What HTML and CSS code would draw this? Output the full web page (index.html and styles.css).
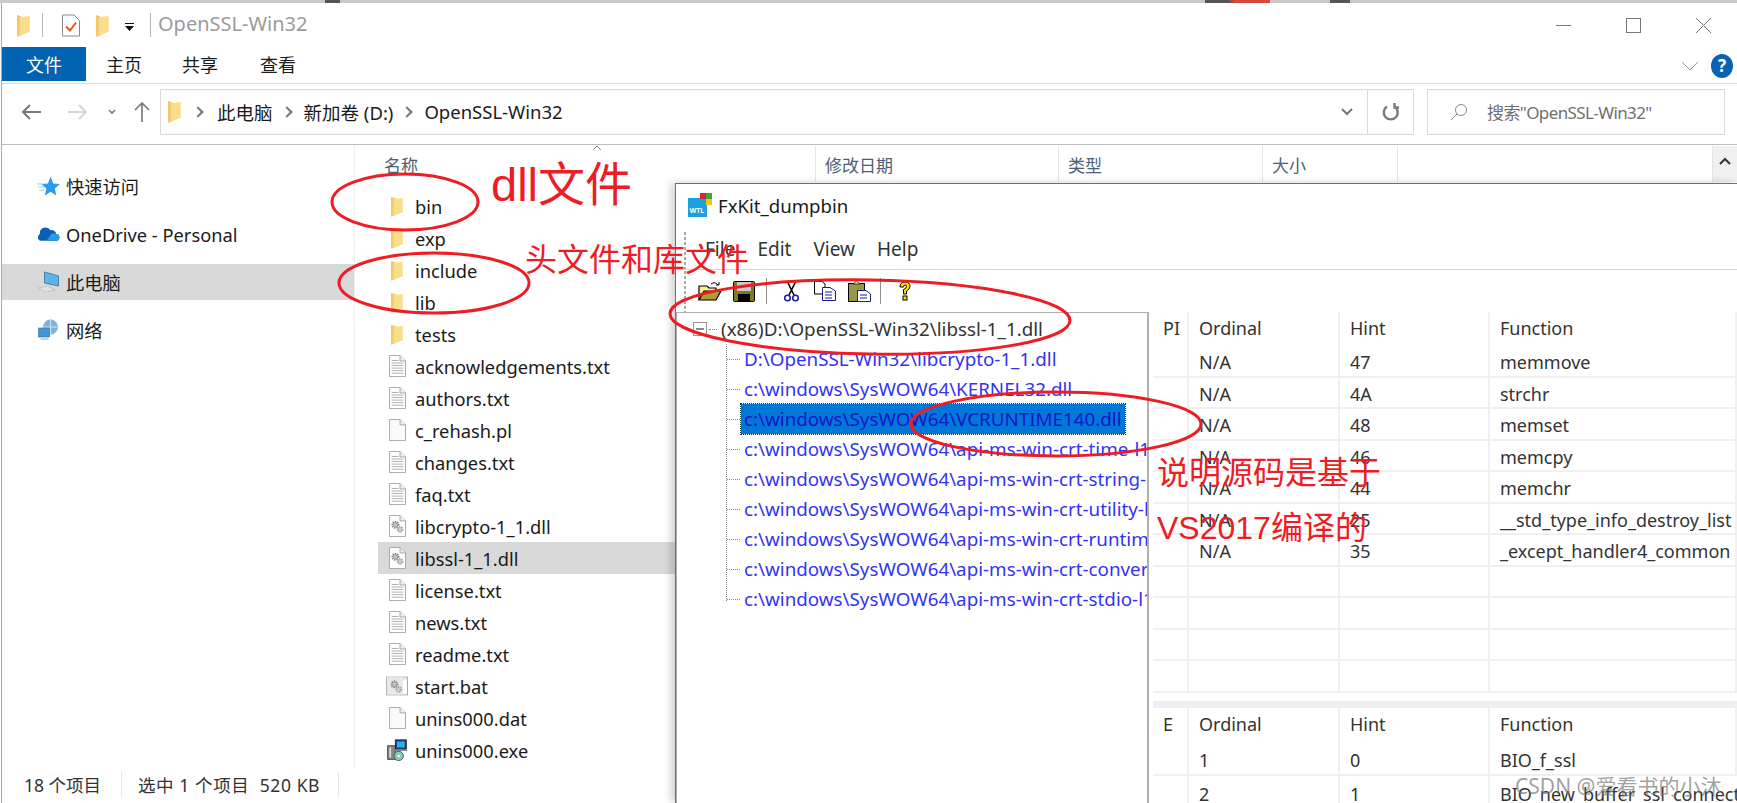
FILE: index.html
```html
<!DOCTYPE html>
<html lang="zh-CN">
<head>
  <meta charset="UTF-8" />
  <title>OpenSSL-Win32</title>
  <link rel="stylesheet" href="styles.css">
</head>
<body>

<!-- Icon sheet -->
<svg class="icon-sheet" xmlns="http://www.w3.org/2000/svg">
  <symbol id="i-folder" viewBox="0 0 14 22">
    <path d="M1 1 L6 3 V20 L1 21 Z" fill="#e7b64e"/>
    <path d="M3 3 L13 2 V17 L3 21 Z" fill="#fbdd8b"/>
    <path d="M3 3 L3 21 L1 22 V1 Z" fill="#f4ca67"/>
  </symbol>
  <symbol id="i-text" viewBox="0 0 20 26">
    <path d="M.5 .5 H13 L19.5 7 V25.5 H.5 Z" fill="#fff" stroke="#9a9a9a"/>
    <path d="M13 .5 V7 H19.5" fill="#eee" stroke="#9a9a9a"/>
    <path d="M3 6.5 H11 M3 9.5 H17 M3 12.5 H17 M3 15.5 H17 M3 18.5 H17 M3 21.5 H17" stroke="#a5a5a5"/>
  </symbol>
  <symbol id="i-blank" viewBox="0 0 20 26">
    <path d="M.5 .5 H13 L19.5 7 V25.5 H.5 Z" fill="#fafafa" stroke="#9a9a9a"/>
    <path d="M13 .5 V7 H19.5" fill="#eee" stroke="#9a9a9a"/>
  </symbol>
  <symbol id="i-dll" viewBox="0 0 20 26">
    <path d="M.5 .5 H13 L19.5 7 V25.5 H.5 Z" fill="#fff" stroke="#9a9a9a"/>
    <path d="M13 .5 V7 H19.5" fill="#eee" stroke="#9a9a9a"/>
    <circle cx="7.500" cy="11.500" r="3.400" fill="#c4c4c4" stroke="#8d8d8d" stroke-width="2.600" stroke-dasharray="1.600 .9"/>
    <circle cx="13" cy="17" r="2.800" fill="#d4d4d4" stroke="#a2a2a2" stroke-width="2.400" stroke-dasharray="1.400 .8"/>
  </symbol>
  <symbol id="i-bat" viewBox="0 0 26 22">
    <rect x=".5" y=".5" width="25" height="21" fill="#fff" stroke="#9a9a9a"/>
    <rect x="1" y="1" width="24" height="3" fill="#e6e6e6"/>
    <rect x="1" y="1" width="19" height="20" fill="#e9e9e9"/>
    <circle cx="10" cy="9" r="3.400" fill="#c4c4c4" stroke="#8d8d8d" stroke-width="2.600" stroke-dasharray="1.600 .9"/>
    <circle cx="15" cy="15" r="2.800" fill="#d4d4d4" stroke="#a2a2a2" stroke-width="2.400" stroke-dasharray="1.400 .8"/>
  </symbol>
  <symbol id="i-exe" viewBox="0 0 24 26">
    <rect x="1" y="8" width="9" height="16" fill="#8a8a8a" stroke="#333"/>
    <rect x="3" y="10" width="2" height="12" fill="#ddd"/>
    <rect x="10" y="1" width="13" height="11" fill="#1b3f9c" stroke="#222"/>
    <rect x="12" y="3" width="9" height="7" fill="#28b5e8"/>
    <rect x="9" y="12" width="15" height="2" fill="#777"/>
    <circle cx="14" cy="20" r="5.5" fill="#7fd0c0" stroke="#444"/>
    <circle cx="14" cy="20" r="1.5" fill="#fff"/>
  </symbol>
  <symbol id="i-gripdown" viewBox="0 0 12 8">
    <path d="M1 1 L6 6 L11 1" fill="none" stroke="currentColor" stroke-width="2"/>
  </symbol>
</svg>

<div class="desk-strip"></div>

<div class="explorer">
  <!-- Title bar -->
  <div class="titlebar">
    <svg class="qa-folder"><use href="#i-folder"/></svg>
    <span class="qa-sep"></span>
    <svg class="qa-check" viewBox="0 0 18 22">
      <path d="M.5 .5 H12 L17.5 6 V21.5 H.5 Z" fill="#fff" stroke="#8a8a8a"/>
      <path d="M4 12 L8 16 L14 8" fill="none" stroke="#e8551c" stroke-width="2"/>
    </svg>
    <svg class="qa-folder qa-folder-2"><use href="#i-folder"/></svg>
    <svg class="qa-drop" viewBox="0 0 9 9"><path d="M0 0 H9 V1 H0 Z M0 3 H9 L4.5 8 Z" fill="#111"/></svg>
    <span class="qa-sep qa-sep-2"></span>
    <span class="window-title">OpenSSL-Win32</span>
    <div class="win-controls">
      <svg viewBox="0 0 15 15"><path d="M0 7.5 H15" stroke="#777"/></svg>
      <svg viewBox="0 0 15 15"><rect x=".5" y=".5" width="14" height="14" fill="none" stroke="#777"/></svg>
      <svg viewBox="0 0 15 15"><path d="M0 0 L15 15 M15 0 L0 15" stroke="#777"/></svg>
    </div>
  </div>

  <!-- Ribbon tabs -->
  <div class="ribbon">
    <span class="tab tab-file">文件</span>
    <span class="tab">主页</span>
    <span class="tab">共享</span>
    <span class="tab tab-view">查看</span>
    <svg class="ribbon-chevron" viewBox="0 0 18 10"><path d="M1 1 L9 9 L17 1" fill="none" stroke="#9a9a9a"/></svg>
    <span class="help-dot">?</span>
  </div>

  <!-- Address row -->
  <div class="address-row">
    <svg class="nav nav-back" viewBox="0 0 20 16"><path d="M9 1 L2 8 L9 15 M2 8 H20" fill="none" stroke="#777" stroke-width="2"/></svg>
    <svg class="nav nav-forward" viewBox="0 0 20 16"><path d="M11 1 L18 8 L11 15 M18 8 H0" fill="none" stroke="#d6d6d6" stroke-width="2"/></svg>
    <svg class="nav nav-down" viewBox="0 0 8 6"><path d="M1 1 L4 4 L7 1" fill="none" stroke="#777" stroke-width="1.6"/></svg>
    <svg class="nav nav-up" viewBox="0 0 16 20"><path d="M1 8 L8 1 L15 8 M8 1 V20" fill="none" stroke="#777" stroke-width="1.6"/></svg>
    <div class="address-box">
      <svg class="crumb-folder"><use href="#i-folder"/></svg>
      <span class="crumb-sep crumb-sep-first"></span><span>此电脑</span>
      <span class="crumb-sep"></span><span>新加卷 (D:)</span>
      <span class="crumb-sep"></span><span>OpenSSL-Win32</span>
      <svg class="address-drop"><use href="#i-gripdown"/></svg>
      <span class="refresh">
        <svg viewBox="0 0 18 20"><path d="M12.5 4.5 A7 7 0 1 1 5 4.5 M12.5 1 V5.5 H17" fill="none" stroke="#7a7a7a" stroke-width="2.4"/></svg>
      </span>
    </div>
    <div class="search-box">
      <svg viewBox="0 0 18 18"><circle cx="11" cy="7" r="5.5" fill="none" stroke="#888"/><path d="M7 11 L1 17" stroke="#888"/></svg>
      <span>搜索"OpenSSL-Win32"</span>
    </div>
  </div>

  <div class="main">
    <!-- Navigation pane -->
    <nav class="sidebar">
      <div class="side-item">
        <svg viewBox="0 0 22 20"><path d="M13 1 L15.500 7.500 L22 8 L17 12.500 L18.500 19 L13 15.500 L7.500 19 L9 12.500 L4 8 L10.500 7.500 Z" fill="#2b9af0"/><path d="M0 8 H6 M1 11 H7 M2 14 H7" stroke="#9fd0f5"/></svg>
        快速访问
      </div>
      <div class="side-item">
        <svg viewBox="0 0 24 16"><path d="M3 15 A4 4 0 0 1 3 8 A6 6 0 0 1 14 4 A5 5 0 0 1 20 8 A3.600 3.600 0 0 1 21 15 Z" fill="#0a5fb5"/><path d="M10 15 L15 8 A5 5 0 0 1 20 8 A3.600 3.600 0 0 1 21 15 Z" fill="#2a9be8"/></svg>
        OneDrive - Personal
      </div>
      <div class="side-item is-selected">
        <svg viewBox="0 0 22 22"><path d="M7 1 L21 5 V15 L7 12 Z" fill="#5cb4ea" stroke="#4a7fa8"/><path d="M1 17 L10 15 L18 19 L8 21 Z" fill="#dfe3e6" stroke="#a9b0b5" stroke-width=".6"/></svg>
        此电脑
      </div>
      <div class="side-item">
        <svg viewBox="0 0 22 22"><circle cx="13" cy="8" r="7.500" fill="#7db4dc"/><path d="M13 1 V15 M6 8 H20" stroke="#cfe4f3"/><rect x="1" y="9" width="11" height="9" fill="#3f96db" stroke="#3b6f99" stroke-width=".6"/><rect x="3" y="18" width="8" height="3" fill="#c9cfd3"/></svg>
        网络
      </div>
    </nav>

    <!-- File list -->
    <section class="files">
      <div class="file-head">
        <span class="col-name">名称</span>
        <span class="col-date">修改日期</span>
        <span class="col-type">类型</span>
        <span class="col-size">大小</span>
        <span class="col-rest"></span>
        <span class="head-scroll">
          <svg viewBox="0 0 12 8"><path d="M1 7 L6 2 L11 7" fill="none" stroke="#333" stroke-width="2"/></svg>
        </span>
        <svg class="sort-caret" viewBox="0 0 10 6"><path d="M1 5 L5 1 L9 5" fill="none" stroke="#8a8a8a"/></svg>
      </div>
      <ul class="file-list">
        <li><svg class="ic-folder"><use href="#i-folder"/></svg>bin</li>
        <li><svg class="ic-folder"><use href="#i-folder"/></svg>exp</li>
        <li><svg class="ic-folder"><use href="#i-folder"/></svg>include</li>
        <li><svg class="ic-folder"><use href="#i-folder"/></svg>lib</li>
        <li><svg class="ic-folder"><use href="#i-folder"/></svg>tests</li>
        <li><svg class="ic-file"><use href="#i-text"/></svg>acknowledgements.txt</li>
        <li><svg class="ic-file"><use href="#i-text"/></svg>authors.txt</li>
        <li><svg class="ic-file"><use href="#i-blank"/></svg>c_rehash.pl</li>
        <li><svg class="ic-file"><use href="#i-text"/></svg>changes.txt</li>
        <li><svg class="ic-file"><use href="#i-text"/></svg>faq.txt</li>
        <li><svg class="ic-file"><use href="#i-dll"/></svg>libcrypto-1_1.dll</li>
        <li class="is-selected"><svg class="ic-file"><use href="#i-dll"/></svg>libssl-1_1.dll</li>
        <li><svg class="ic-file"><use href="#i-text"/></svg>license.txt</li>
        <li><svg class="ic-file"><use href="#i-text"/></svg>news.txt</li>
        <li><svg class="ic-file"><use href="#i-text"/></svg>readme.txt</li>
        <li><svg class="ic-wide"><use href="#i-bat"/></svg>start.bat</li>
        <li><svg class="ic-file"><use href="#i-blank"/></svg>unins000.dat</li>
        <li><svg class="ic-wide"><use href="#i-exe"/></svg>unins000.exe</li>
      </ul>
    </section>
  </div>

  <!-- Status bar -->
  <div class="statusbar">
    <span class="status-count">18 个项目</span>
    <span class="status-selected">选中 1 个项目&nbsp; 520 KB</span>
  </div>
</div>

<!-- FxKit window, floats over the explorer -->
<div class="fxkit">
  <div class="fx-title">
    <svg viewBox="0 0 24 24">
      <rect x="0" y="5" width="19" height="19" fill="#1ba1e2"/>
      <rect x="12" y="0" width="6" height="6" fill="#d9232e"/>
      <rect x="18" y="0" width="6" height="6" fill="#3aa53a"/>
      <rect x="18" y="6" width="6" height="6" fill="#f5c518"/>
      <text x="1.500" y="20" class="fx-logo-text">WTL</text>
    </svg>
    FxKit_dumpbin
  </div>
  <div class="fx-menu">
    <span>File</span><span>Edit</span><span>View</span><span>Help</span>
  </div>
  <div class="fx-toolbar">
    <svg class="tb-open" viewBox="0 0 24 20"><path d="M1 19 V5 H9 L11 7 H18 V10" fill="#f5f09a" stroke="#000" stroke-width="1.200"/><path d="M1 19 L6 10 H23 L18 19 Z" fill="#a8a030" stroke="#000" stroke-width="1.200"/><path d="M13 3 Q17 0 20 4 M18 4 H21 V1" fill="none" stroke="#000"/></svg>
    <svg class="tb-save" viewBox="0 0 22 21"><rect x=".5" y=".5" width="21" height="20" rx="1" fill="#7f7a20" stroke="#000"/><rect x="4" y="1" width="14" height="9" fill="#c9c9c9"/><rect x="5" y="13" width="12" height="7" fill="#000"/></svg>
    <span class="tb-sep"></span>
    <svg class="tb-cut" viewBox="0 0 15 21"><path d="M3 0 L10 14 M12 0 L5 14" stroke="#000" stroke-width="1.600"/><circle cx="3.500" cy="17" r="2.800" fill="#fff" stroke="#1a1a90" stroke-width="1.500"/><circle cx="11.500" cy="17" r="2.800" fill="#fff" stroke="#1a1a90" stroke-width="1.500"/></svg>
    <svg class="tb-copy" viewBox="0 0 22 20"><path d="M.5 .5 H8 L11 3 V13 H.5 Z" fill="#fff" stroke="#000"/><path d="M8.500 6.500 H16 L21.500 10 V19.500 H8.500 Z" fill="#fff" stroke="#1a1a90"/><path d="M11 11 H18 M11 14 H18 M11 17 H18" stroke="#1a1a90"/></svg>
    <svg class="tb-paste" viewBox="0 0 23 21"><rect x=".5" y="2.500" width="16" height="18" fill="#9a9548" stroke="#000"/><path d="M5 3 L8.500 0 L12 3 Z" fill="#f5f09a" stroke="#000" stroke-width=".7"/><path d="M9.500 9.500 H18 L22.500 13 V20.500 H9.500 Z" fill="#fff" stroke="#1a1a90"/><path d="M12 14 H19 M12 17 H19" stroke="#1a1a90"/></svg>
    <span class="tb-sep tb-sep-2"></span>
    <svg class="tb-help" viewBox="0 0 16 20"><path d="M3 6 Q3 1 8 1 Q13 1 13 5.500 Q13 8 9.500 10 V13 H6.500 V8.500 Q9.500 7.500 9.500 5.500 Q9.500 4 8 4 Q6.500 4 6.500 6 Z" fill="#f5e500" stroke="#000"/><rect x="6" y="15" width="4" height="4" fill="#f5e500" stroke="#000"/></svg>
  </div>
  <div class="fx-body">
    <!-- Dependency tree -->
    <div class="tree">
      <div class="tree-root"><span class="tree-toggle"></span><span class="tree-dots"></span>(x86)D:\OpenSSL-Win32\libssl-1_1.dll</div>
      <ul class="tree-children">
        <li><span>D:\OpenSSL-Win32\libcrypto-1_1.dll</span></li>
        <li><span>c:\windows\SysWOW64\KERNEL32.dll</span></li>
        <li class="is-current"><span>c:\windows\SysWOW64\VCRUNTIME140.dll</span></li>
        <li><span>c:\windows\SysWOW64\api-ms-win-crt-time-l1-1-0.dll</span></li>
        <li><span>c:\windows\SysWOW64\api-ms-win-crt-string-l1-1-0.dll</span></li>
        <li><span>c:\windows\SysWOW64\api-ms-win-crt-utility-l1-1-0.dll</span></li>
        <li><span>c:\windows\SysWOW64\api-ms-win-crt-runtime-l1-1-0.dll</span></li>
        <li><span>c:\windows\SysWOW64\api-ms-win-crt-convert-l1-1-0.dll</span></li>
        <li><span>c:\windows\SysWOW64\api-ms-win-crt-stdio-l1-1-0.dll</span></li>
      </ul>
    </div>
    <!-- Import / export tables -->
    <div class="tables">
      <div class="table table-imports">
        <div class="t-head"><span>PI</span><span>Ordinal</span><span>Hint</span><span>Function</span></div>
        <div class="t-row"><span></span><span>N/A</span><span>47</span><span>memmove</span></div>
        <div class="t-row"><span></span><span>N/A</span><span>4A</span><span>strchr</span></div>
        <div class="t-row"><span></span><span>N/A</span><span>48</span><span>memset</span></div>
        <div class="t-row"><span></span><span>N/A</span><span>46</span><span>memcpy</span></div>
        <div class="t-row"><span></span><span>N/A</span><span>44</span><span>memchr</span></div>
        <div class="t-row"><span></span><span>N/A</span><span>25</span><span>__std_type_info_destroy_list</span></div>
        <div class="t-row"><span></span><span>N/A</span><span>35</span><span>_except_handler4_common</span></div>
        <div class="t-row"><span></span><span></span><span></span><span></span></div>
        <div class="t-row"><span></span><span></span><span></span><span></span></div>
        <div class="t-row"><span></span><span></span><span></span><span></span></div>
        <div class="t-row"><span></span><span></span><span></span><span></span></div>
      </div>
      <div class="table-split"></div>
      <div class="table table-exports">
        <div class="t-head"><span>E</span><span>Ordinal</span><span>Hint</span><span>Function</span></div>
        <div class="t-row"><span></span><span>1</span><span>0</span><span>BIO_f_ssl</span></div>
        <div class="t-row"><span></span><span>2</span><span>1</span><span>BIO_new_buffer_ssl_connect</span></div>
      </div>
    </div>
  </div>
</div>

<!-- Red hand annotations, on top of everything -->
<svg class="marks" viewBox="0 0 1737 803">
  <ellipse cx="405" cy="202" rx="73" ry="28"/>
  <ellipse cx="434" cy="283" rx="95" ry="30"/>
  <ellipse cx="870" cy="317" rx="200" ry="37" transform="rotate(1 870 317)"/>
  <ellipse cx="1056" cy="424" rx="145" ry="32"/>
</svg>
<span class="note note-dll">dll文件</span>
<span class="note note-head">头文件和库文件</span>
<span class="note note-src">说明源码是基于</span>
<span class="note note-vs">VS2017编译的</span>
<span class="watermark">CSDN @爱看书的小沐</span>

</body>
</html>
```

FILE: styles.css
```css
* {
  box-sizing: border-box;
}

body {
  margin: 0;
  width: 1737px;
  height: 803px;
  overflow: hidden;
  position: relative;
  background: white;
  color: #1a1a1a;
  font-family: "Noto Sans", "Noto Sans CJK SC", sans-serif;
  font-size: 18px;
}

ul {
  list-style: none;
  margin: 0;
  padding: 0;
}

.icon-sheet {
  display: none;
}

.desk-strip {
  height: 3px;
  background:
    linear-gradient(to right, #c9c9c9 325px, #555 325px, #555 340px, #c9c9c9 340px, #c9c9c9 1205px, #555 1205px, #555 1228px, #d8483a 1235px, #d8483a 1270px, #c9c9c9 1270px, #c9c9c9 1330px, #555 1330px, #555 1350px, #c9c9c9 1350px);
}

.explorer {
  height: 800px;
  display: flex;
  flex-direction: column;
  border-left: 1px solid #a8a8a8;
  margin-left: 1px;
}

/* Title bar */
.titlebar {
  height: 44px;
  display: flex;
  align-items: center;
  padding-left: 14px;
}

.qa-folder {
  width: 15px;
  height: 23px;
}

.qa-folder-2 {
  margin-left: 15px;
}

.qa-sep {
  width: 1px;
  height: 24px;
  background: #b5b5b5;
  margin-left: 11px;
}

.qa-sep-2 {
  margin-left: 16px;
}

.qa-check {
  width: 18px;
  height: 23px;
  margin-left: 19px;
}

.qa-drop {
  width: 9px;
  height: 9px;
  margin-left: 15px;
  margin-top: 4px;
}

.window-title {
  margin: -3px 0 0 7px;
  color: #9b9b9b;
  font-size: 20px;
}

.win-controls {
  margin-left: auto;
  display: flex;
  gap: 55px;
  padding-right: 26px;
}

.win-controls svg {
  width: 15px;
  height: 15px;
}

/* Ribbon */
.ribbon {
  height: 37px;
  display: flex;
  align-items: flex-start;
  border-bottom: 1px solid #dcdcdc;
}

.tab {
  height: 34px;
  display: flex;
  align-items: center;
  margin-left: 41px;
  margin-right: -1px;
}

.tab-file {
  width: 84px;
  margin: 0;
  justify-content: center;
  background: #0063b1;
  color: white;
}

.tab-file + .tab {
  margin-left: 20px;
}

.tab-view {
  margin-left: 43px;
}

.ribbon-chevron {
  width: 18px;
  height: 10px;
  margin-left: auto;
  margin-top: 14px;
}

.help-dot {
  width: 22px;
  height: 24px;
  margin: 7px 4px 0 12px;
  border-radius: 50%;
  background: #0a62b5;
  color: white;
  font-size: 17px;
  font-weight: bold;
  text-align: center;
  line-height: 24px;
}

/* Address row */
.address-row {
  height: 61px;
  padding: 5px 12px 10px 0;
  display: flex;
  align-items: center;
  border-bottom: 1px solid #bdbdbd;
}

.nav {
  flex: none;
}

.nav-back {
  width: 20px;
  height: 16px;
  margin-left: 19px;
}

.nav-forward {
  width: 20px;
  height: 16px;
  margin-left: 27px;
}

.nav-down {
  width: 8px;
  height: 6px;
  margin-left: 20px;
}

.nav-up {
  width: 16px;
  height: 20px;
  margin-left: 18px;
}

.address-box {
  width: 1254px;
  height: 46px;
  margin-left: 10px;
  padding-left: 6px;
  border: 1px solid #d9d9d9;
  display: flex;
  align-items: center;
  font-size: 18.500px;
}

.crumb-folder {
  width: 15px;
  height: 23px;
}

.crumb-sep {
  width: 8px;
  height: 8px;
  margin: 0 13px 0 10px;
  border-top: 2.500px solid #777;
  border-right: 2.500px solid #777;
  transform: rotate(45deg);
}

.crumb-sep-first {
  margin: 0 15px 0 12px;
}

.address-drop {
  width: 12px;
  height: 8px;
  margin-left: auto;
  color: #777;
}

.refresh {
  width: 46px;
  height: 100%;
  margin-left: 14px;
  border-left: 1px solid #d9d9d9;
  display: flex;
  align-items: center;
  justify-content: center;
}

.refresh svg {
  width: 18px;
  height: 20px;
}

.search-box {
  width: 298px;
  height: 46px;
  margin-left: 13px;
  padding-left: 22px;
  border: 1px solid #d9d9d9;
  display: flex;
  align-items: center;
  gap: 19px;
  color: #6f6f6f;
  font-size: 17px;
  letter-spacing: -0.6px;
  white-space: nowrap;
}

.search-box svg {
  width: 18px;
  height: 18px;
}

/* Main area */
.main {
  flex: 1;
  display: flex;
  min-height: 0;
}

.sidebar {
  width: 353px;
  flex: none;
  padding-top: 23px;
  border-right: 1px solid #f0f0f0;
}

.side-item {
  height: 36px;
  margin-bottom: 12px;
  padding-left: 35px;
  display: flex;
  align-items: center;
  gap: 6px;
  font-size: 18.300px;
}

.side-item svg {
  width: 23px;
  height: 22px;
}

.side-item.is-selected {
  background: #d9d9d9;
}

.files {
  flex: 1;
  min-width: 0;
  position: relative;
}

.file-head {
  height: 37px;
  display: flex;
  color: #4c607a;
  font-size: 17px;
  padding-top: 1px;
}

.file-head span {
  display: flex;
  align-items: center;
  padding: 0 0 0 9px;
  border-right: 1px solid #e5e5e5;
}

.col-name {
  width: 461px;
  padding-left: 29px !important;
}

.col-date {
  width: 243px;
}

.col-type {
  width: 204px;
}

.col-size {
  width: 135px;
}

.col-rest {
  flex: 1;
}

.file-head .head-scroll {
  width: 24px;
  padding: 0;
  border: 0;
  justify-content: center;
  background: #f0f0f0;
}

.head-scroll svg {
  width: 12px;
  height: 8px;
  margin-top: -6px;
}

.sort-caret {
  position: absolute;
  left: 237px;
  top: 0;
  width: 10px;
  height: 6px;
}

.file-list {
  margin-left: 23px;
  padding-top: 8px;
  width: 297px;
}

.file-list li {
  height: 32px;
  display: flex;
  align-items: center;
  font-size: 18.300px;
}

.file-list li.is-selected {
  background: #d9d9d9;
}

.ic-folder {
  width: 14px;
  height: 21px;
  margin: 0 11px 0 12px;
}

.ic-file {
  width: 17px;
  height: 22px;
  margin: 0 9px 0 11px;
}

.ic-wide {
  width: 22px;
  height: 22px;
  margin: 0 7px 0 8px;
}

/* Status bar */
.statusbar {
  height: 33px;
  display: flex;
  align-items: center;
  font-size: 17.500px;
  color: #333;
  padding-bottom: 4px;
}

.status-count {
  width: 120px;
  padding-left: 22px;
  border-right: 1px solid #e5e5e5;
}

.status-selected {
  padding: 0 18px 0 16px;
  border-right: 1px solid #e5e5e5;
  letter-spacing: 0.6px;
}

/* FxKit window */
.fxkit {
  position: absolute;
  left: 675px;
  top: 183px;
  width: 1062px;
  height: 620px;
  background: white;
  border: 1px solid #6f6f6f;
  border-width: 1px 0 0 1px;
  box-shadow: -4px 0 8px rgba(0, 0, 0, 0.18);
  display: flex;
  flex-direction: column;
}

.fx-title {
  height: 42px;
  padding-left: 12px;
  display: flex;
  align-items: center;
  gap: 6px;
  font-size: 18.600px;
  margin-bottom: 4px;
}

.fx-title svg {
  width: 24px;
  height: 24px;
}

.fx-logo-text {
  fill: white;
  font-size: 7px;
  font-weight: bold;
}

.fx-menu {
  height: 40px;
  padding: 0 0 2px 29px;
  display: flex;
  align-items: center;
  gap: 22px;
  font-size: 19px;
  color: #333;
  border-bottom: 1px solid #d6d6d6;
  background: radial-gradient(#aaa 1px, transparent 1.5px) 7px 6px / 4px 5px repeat-y;
}

.fx-toolbar {
  height: 42px;
  padding-left: 22px;
  display: flex;
  align-items: center;
  background: radial-gradient(#aaa 1px, transparent 1.5px) 7px 0 / 4px 5px repeat-y;
}

.tb-open {
  width: 24px;
  height: 20px;
}

.tb-save {
  width: 22px;
  height: 21px;
  margin-left: 11px;
}

.tb-sep {
  width: 1px;
  height: 26px;
  margin-left: 11px;
  background: #8f8f8f;
}

.tb-sep-2 {
  margin-left: 9px;
}

.tb-cut {
  width: 15px;
  height: 21px;
  margin-left: 17px;
}

.tb-copy {
  width: 22px;
  height: 20px;
  margin-left: 15px;
}

.tb-paste {
  width: 23px;
  height: 21px;
  margin-left: 12px;
}

.tb-help {
  width: 16px;
  height: 20px;
  margin-left: 16px;
}

.fx-body {
  flex: 1;
  min-height: 0;
  display: flex;
}

/* Tree */
.tree {
  width: 473px;
  flex: none;
  border: 1px solid #b0b0b0;
  border-width: 1px 2px 0 1px;
  padding-top: 1px;
  overflow: hidden;
  font-size: 18.800px;
  white-space: nowrap;
}

.tree-root {
  height: 30px;
  display: flex;
  align-items: center;
  padding-left: 16px;
  color: #333;
}

.tree-toggle {
  width: 14px;
  height: 14px;
  flex: none;
  border: 1px solid #9a9a9a;
  background: linear-gradient(#8a8a8a, #8a8a8a) center / 8px 2px no-repeat;
}

.tree-dots {
  width: 8px;
  flex: none;
  margin: 0 4px 0 2px;
  border-top: 1px dotted #888;
}

.tree-children {
  margin-left: 49px;
  border-left: 1px dotted #888;
  height: 257px;
  color: #3333f2;
}

.tree-children li {
  height: 30px;
  display: flex;
  align-items: center;
  padding-left: 17px;
  position: relative;
}

.tree-children li::before {
  content: "";
  position: absolute;
  left: 0;
  top: 50%;
  width: 13px;
  border-top: 1px dotted #888;
}

.is-current span {
  background: #0078d7;
  outline: 1px dotted #0a3a2a;
  margin-left: -3px;
  padding: 0 3px;
  line-height: 30px;
  color: #1414c8;
}

/* Tables */
.tables {
  flex: 1;
  min-width: 0;
  padding-left: 4px;
  font-size: 18px;
  color: #333;
}

.table-imports {
  height: 389px;
  overflow: hidden;
}

.table-split {
  height: 7px;
  background: #efefef;
}

.t-head,
.t-row {
  display: grid;
  grid-template-columns: 36px 151px 150px 1fr;
  white-space: nowrap;
}

.t-head {
  height: 34px;
}

.t-head span {
  display: flex;
  align-items: center;
  padding: 0 0 3px 10px;
  border-right: 2px solid #f0f0f0;
}

.t-row {
  height: 31.500px;
  border-bottom: 2px solid #f0f0f0;
}

.t-row span {
  display: flex;
  align-items: center;
  padding: 3px 0 0 10px;
  border-right: 2px solid #f0f0f0;
}

.table-exports .t-row {
  height: 34px;
}

/* Annotations */
.marks {
  position: absolute;
  left: 0;
  top: 0;
  width: 1737px;
  height: 803px;
  pointer-events: none;
}

.marks ellipse {
  fill: none;
  stroke: #ee1c25;
  stroke-width: 3;
}

.note {
  position: absolute;
  color: #ee1c25;
  font-family: "Liberation Sans", "Noto Sans CJK SC", sans-serif;
  line-height: 1;
  white-space: nowrap;
}

.note-dll {
  left: 491px;
  top: 161px;
  font-size: 47px;
}

.note-head {
  left: 525px;
  top: 244px;
  font-size: 32px;
}

.note-src {
  left: 1157px;
  top: 457px;
  font-size: 32px;
}

.note-vs {
  left: 1157px;
  top: 512px;
  font-size: 32px;
}

.watermark {
  position: absolute;
  left: 1515px;
  top: 770px;
  font-size: 21px;
  color: rgba(120, 120, 120, 0.7);
  white-space: nowrap;
}
```
